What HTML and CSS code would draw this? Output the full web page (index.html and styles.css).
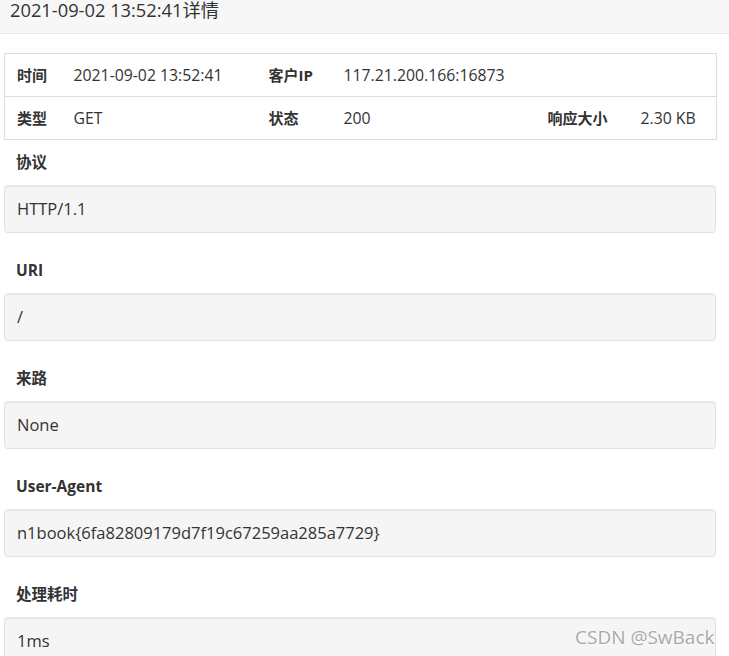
FILE: index.html
```html
<!DOCTYPE html>
<html lang="zh">
<head>
<meta charset="utf-8">
<title>详情</title>
<link rel="stylesheet" href="styles.css">
</head>
<body>
<div class="modal">
  <div class="modal-header">
    <h4 class="modal-title">2021-09-02 13:52:41详情</h4>
  </div>
  <div class="modal-body">
    <table class="info">
      <colgroup>
        <col class="c1"><col class="c2"><col class="c3"><col class="c4"><col class="c5"><col class="c6">
      </colgroup>
      <tr>
        <th>时间</th><td>2021-09-02 13:52:41</td>
        <th>客户IP</th><td>117.21.200.166:16873</td>
        <th></th><td></td>
      </tr>
      <tr>
        <th>类型</th><td>GET</td>
        <th>状态</th><td>200</td>
        <th>响应大小</th><td>2.30 KB</td>
      </tr>
    </table>

    <div class="field">
      <div class="field-label">协议</div>
      <div class="well">HTTP/1.1</div>
    </div>
    <div class="field">
      <div class="field-label">URI</div>
      <div class="well">/</div>
    </div>
    <div class="field">
      <div class="field-label">来路</div>
      <div class="well">None</div>
    </div>
    <div class="field">
      <div class="field-label">User-Agent</div>
      <div class="well">n1book{6fa82809179d7f19c67259aa285a7729}</div>
    </div>
    <div class="field">
      <div class="field-label">处理耗时</div>
      <div class="well">1ms</div>
    </div>
  </div>
</div>
<div class="watermark">CSDN @SwBack</div>
</body>
</html>
```

FILE: styles.css
```css
html, body {
  margin: 0;
  padding: 0;
  background: #fff;
  height: 656px;
  overflow: hidden;
}
body {
  font-family: "Open Sans", "Noto Sans", "Noto Sans CJK SC", sans-serif;
  color: #333;
  position: relative;
}
.modal-header {
  height: 33px;
  background: #f7f7f7;
  border-bottom: 1px solid #e9e9e9;
  padding: 0 10px;
}
.modal-title {
  margin: 0;
  font-size: 18.3px;
  line-height: 20px;
  font-weight: normal;
  color: #333;
}
.modal-body {
  padding: 19px 0 0 4px;
  width: 712px;
}
.info {
  width: 712px;
  table-layout: fixed;
  border-collapse: collapse;
  border: 1px solid #ddd;
  margin-bottom: 12px;
}
.c1 { width: 57px; }
.c2 { width: 195px; }
.c3 { width: 75px; }
.c4 { width: 204px; }
.c5 { width: 93px; }
.c6 { width: 88px; }
.info th, .info td {
  text-align: left;
  padding: 10px 0 10px 12px;
  line-height: 22px;
  border-top: 1px solid #ddd;
  white-space: nowrap;
  vertical-align: middle;
}
.info th {
  font-size: 15px;
  font-weight: bold;
}
.info td {
  font-size: 15.8px;
  font-weight: normal;
}
.field-label {
  font-size: 15.5px;
  line-height: 20px;
  font-weight: bold;
  padding-left: 12px;
  margin-bottom: 13px;
}
.well {
  background: #f5f5f5;
  border: 1px solid #e3e3e3;
  border-radius: 4px;
  box-shadow: inset 0 1px 1px rgba(0,0,0,0.05);
  padding: 12px 12px;
  font-size: 16.5px;
  line-height: 22px;
  margin-bottom: 27px;
}
.watermark {
  position: absolute;
  left: 575px;
  top: 624px;
  font-family: "Open Sans", "Noto Sans", sans-serif;
  font-size: 19px;
  line-height: 26px;
  color: #a8a8a8;
  text-shadow: 0 0 2px #fff, 0 0 2px #fff;
  white-space: nowrap;
}
```
